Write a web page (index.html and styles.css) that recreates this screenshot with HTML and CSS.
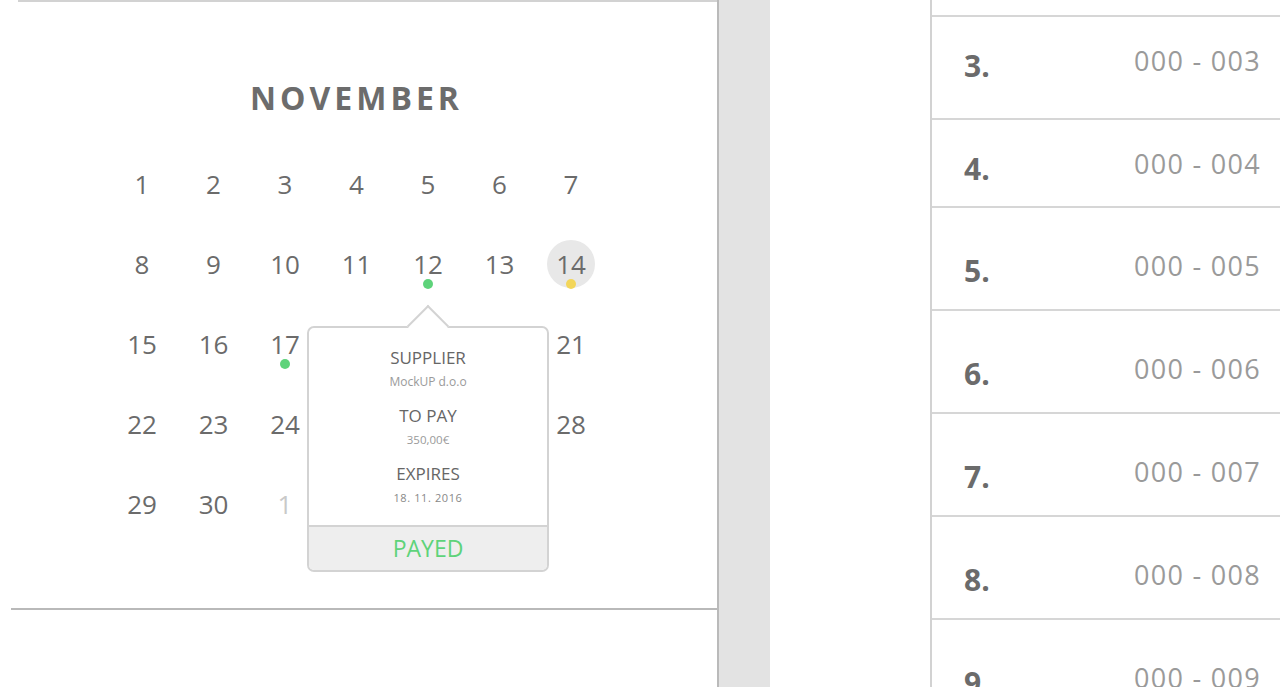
FILE: index.html
```html
<!DOCTYPE html>
<html lang="en">
<head>
<meta charset="utf-8">
<title>Calendar</title>
<link rel="stylesheet" href="styles.css">
</head>
<body>
<div class="page">
  <section class="cal-panel">
    <div class="cal-card">
      <h1 class="month">NOVEMBER</h1>
      <div class="grid">
        <div class="day">1</div><div class="day">2</div><div class="day">3</div><div class="day">4</div><div class="day">5</div><div class="day">6</div><div class="day">7</div>
        <div class="day">8</div><div class="day">9</div><div class="day">10</div><div class="day">11</div>
        <div class="day">12<span class="dot dot-green"></span></div>
        <div class="day">13</div>
        <div class="day"><span class="today">14</span><span class="dot dot-yellow"></span></div>
        <div class="day">15</div><div class="day">16</div>
        <div class="day">17<span class="dot dot-green"></span></div>
        <div class="day covered"></div><div class="day covered"></div><div class="day covered"></div><div class="day">21</div>
        <div class="day">22</div><div class="day">23</div><div class="day">24</div><div class="day covered"></div><div class="day covered"></div><div class="day covered"></div><div class="day">28</div>
        <div class="day">29</div><div class="day">30</div><div class="day muted">1</div><div class="day"></div><div class="day"></div><div class="day"></div><div class="day"></div>

        <div class="popover">
          <div class="pop-arrow"></div>
          <div class="pop-body">
            <div class="pop-label">SUPPLIER</div>
            <div class="pop-value">MockUP d.o.o</div>
            <div class="pop-label gap">TO PAY</div>
            <div class="pop-value small">350,00€</div>
            <div class="pop-label gap">EXPIRES</div>
            <div class="pop-value date">18. 11. 2016</div>
          </div>
          <div class="pop-footer">PAYED</div>
        </div>
      </div>
    </div>
    <div class="cal-base"></div>
  </section>
  <div class="gutter"></div>
  <div class="spacer"></div>
  <section class="list">
    <div class="row row-cut"></div>
    <div class="row row-a"><span class="num">3.</span><span class="code">000 - 003</span></div>
    <div class="row row-a short"><span class="num">4.</span><span class="code">000 - 004</span></div>
    <div class="row"><span class="num">5.</span><span class="code">000 - 005</span></div>
    <div class="row"><span class="num">6.</span><span class="code">000 - 006</span></div>
    <div class="row"><span class="num">7.</span><span class="code">000 - 007</span></div>
    <div class="row"><span class="num">8.</span><span class="code">000 - 008</span></div>
    <div class="row"><span class="num">9.</span><span class="code">000 - 009</span></div>
  </section>
</div>
</body>
</html>
```

FILE: styles.css
```css
* { box-sizing: border-box; }
html, body { margin: 0; padding: 0; background: #fff; }
body {
  width: 1280px;
  height: 687px;
  overflow: hidden;
  font-family: "Open Sans", "Noto Sans", sans-serif;
}
.page {
  display: flex;
  height: 687px;
  overflow: hidden;
}
.cal-panel {
  width: 719px;
  flex: none;
  display: flex;
  flex-direction: column;
  border-right: 2px solid #bababa;
}
.cal-card {
  margin-left: 18px;
  height: 608px;
  border-top: 2px solid #d2d2d2;
  padding: 74px 22px 0 0;
}
.cal-base {
  margin-left: 11px;
  flex: 1;
  border-top: 2px solid #b9b9b9;
}
.month {
  margin: 0 0 24px 0;
  text-align: center;
  font-size: 32px;
  line-height: 44px;
  font-weight: 700;
  letter-spacing: 4px;
  color: #6c6c6c;
}
.grid {
  position: relative;
  display: grid;
  grid-template-columns: repeat(7, 71.5px);
  grid-auto-rows: 80px;
  justify-content: center;
}
.day {
  position: relative;
  display: flex;
  align-items: center;
  justify-content: center;
  font-size: 26px;
  color: #6b6b6b;
}
.day.muted { color: #c9c9c9; }
.today {
  width: 48px;
  height: 48px;
  border-radius: 50%;
  background: #e8e8e8;
  display: flex;
  align-items: center;
  justify-content: center;
}
.dot {
  position: absolute;
  left: 50%;
  top: 50%;
  width: 10px;
  height: 10px;
  margin: 15px 0 0 -5px;
  border-radius: 50%;
}
.dot-green { background: #5ed37a; }
.dot-yellow { background: #f3d65a; }

.popover {
  position: absolute;
  left: 289px;
  top: 182px;
  width: 242px;
  height: 246px;
  border: 2px solid #d3d3d3;
  border-radius: 7px;
  background: #fff;
  z-index: 2;
  display: flex;
  flex-direction: column;
  text-align: center;
}
.pop-arrow {
  position: absolute;
  left: 50%;
  top: -17px;
  width: 30px;
  height: 30px;
  margin-left: -15px;
  background: #fff;
  border-top: 2px solid #d3d3d3;
  border-left: 2px solid #d3d3d3;
  transform: rotate(45deg);
}
.pop-body {
  position: relative;
  flex: 1;
  padding-top: 20px;
}
.pop-label {
  font-size: 17px;
  line-height: 20px;
  color: #666;
}
.pop-label.gap { margin-top: 16px; }
.pop-value {
  margin-top: 6px;
  font-size: 12px;
  line-height: 16px;
  color: #9a9a9a;
}
.pop-value.small { font-size: 11.5px; }
.pop-value.date { font-size: 11px; color: #888; letter-spacing: 0.6px; }
.pop-footer {
  height: 45px;
  border-top: 2px solid #d3d3d3;
  background: #eeeeee;
  border-radius: 0 0 5px 5px;
  font-size: 23px;
  line-height: 43px;
  color: #5ed37a;
}

.gutter {
  width: 51px;
  flex: none;
  background: #e3e3e3;
}
.spacer {
  width: 160px;
  flex: none;
}
.list {
  flex: 1;
  border-left: 2px solid #d2d2d2;
  display: flex;
  flex-direction: column;
  overflow: hidden;
}
.row {
  flex: none;
  height: 103px;
  border-bottom: 2px solid #d6d6d6;
  display: flex;
  justify-content: space-between;
  align-items: flex-start;
  padding: 42px 19px 0 32px;
}
.row.row-cut { height: 17px; padding: 0; }
.row.row-a { padding-top: 28px; }
.row.short { height: 88px; }
.num {
  font-size: 30px;
  line-height: 32px;
  font-weight: 700;
  color: #6b6b6b;
  margin-top: 5px;
}
.code {
  font-size: 27px;
  line-height: 32px;
  color: #9a9a9a;
  letter-spacing: 1.3px;
}
```
